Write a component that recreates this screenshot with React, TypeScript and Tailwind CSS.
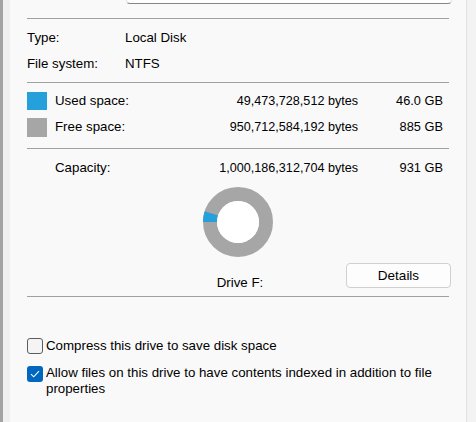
import React from "react";

const font = { fontFamily: '"Liberation Sans", Arial, sans-serif' };

function Sep({ className = "" }: { className?: string }) {
  return <div className={"h-px bg-[#a0a0a0] " + className} />;
}

function Donut() {
  const cx = 35;
  const cy = 35;
  const r = 28;
  const deg = 17.8;
  const a = ((180 + deg) * Math.PI) / 180;
  const x2 = cx + r * Math.cos(a);
  const y2 = cy + r * Math.sin(a);
  return (
    <svg width="70" height="70" viewBox="0 0 70 70">
      <circle cx={cx} cy={cy} r={r} fill="none" stroke="#a6a6a6" strokeWidth="14" />
      <path
        d={`M ${cx - r} ${cy} A ${r} ${r} 0 0 1 ${x2} ${y2}`}
        fill="none"
        stroke="#26a0da"
        strokeWidth="14"
      />
      <circle cx={cx} cy={cy} r="21" fill="#ffffff" />
    </svg>
  );
}

export default function App() {
  return (
    <div
      className="w-[476px] h-[422px] overflow-hidden flex bg-[#f3f3f3] text-[13.3px] text-black"
      style={font}
    >
      <div className="w-[3px] bg-[#a3a3a3]" />
      <div className="w-[7px] bg-[#f0f0f0]" />
      <div className="w-[457px] bg-[#f9f9f9] border-r border-[#e3e3e3] pl-[17px] pr-[17px] flex flex-col">
        {/* text box remnant */}
        <div className="ml-[99px] mr-[-3px] h-[24px] mt-[-20px] bg-white border border-[#e0e0e0] border-b-[#868686] rounded-[4px]" />
        <Sep className="mt-[14px]" />

        <div className="mt-[9px] h-[20px] flex items-center">
          <span className="w-[98px]">Type:</span>
          <span>Local Disk</span>
        </div>
        <div className="mt-[6px] h-[20px] flex items-center">
          <span className="w-[98px]">File system:</span>
          <span>NTFS</span>
        </div>
        <Sep className="mt-[8px]" />

        <div className="mt-[8px] h-[20px] flex items-center pr-[6px]">
          <div className="w-[20px] h-[18px] bg-[#26a0da]" />
          <span className="ml-[8px] flex-1">Used space:</span>
          <span className="text-[12.6px]">49,473,728,512 bytes</span>
          <span className="w-[85px] text-right text-[12.8px]">46.0 GB</span>
        </div>
        <div className="mt-[6px] h-[20px] flex items-center pr-[6px]">
          <div className="w-[20px] h-[19px] bg-[#a6a6a6]" />
          <span className="ml-[8px] flex-1">Free space:</span>
          <span className="text-[12.6px]">950,712,584,192 bytes</span>
          <span className="w-[85px] text-right text-[12.8px]">885 GB</span>
        </div>
        <Sep className="mt-[11px]" />

        <div className="mt-[9px] h-[20px] flex items-center pr-[6px]">
          <span className="ml-[28px] flex-1">Capacity:</span>
          <span className="text-[12.6px]">1,000,186,312,704 bytes</span>
          <span className="w-[85px] text-right text-[12.8px]">931 GB</span>
        </div>

        <div className="mt-[9px] flex justify-center">
          <Donut />
        </div>

        <div className="mt-[6px] grid grid-cols-[1fr_auto_1fr] items-start">
          <div />
          <div className="pt-[12px] leading-[16px] ml-[4px]">Drive F:</div>
          <div className="flex justify-end mr-[-2px]">
            <button className="w-[105px] h-[25px] rounded-[4px] border border-[#d0d0d0] bg-[#fdfdfd] text-[13.5px] leading-none">
              Details
            </button>
          </div>
        </div>
        <Sep className="mt-[5px]" />

        <div className="mt-[41px] flex items-center h-[16px]">
          <div className="w-[16px] h-[16px] rounded-[3px] border border-[#5c5c5c] bg-[#f4f4f4]" />
          <span className="ml-[3px] leading-[16px]">Compress this drive to save disk space</span>
        </div>
        <div className="mt-[11px] flex items-start">
          <div className="mt-[1px] w-[16px] h-[16px] shrink-0 rounded-[3px] bg-[#0067c0] flex items-center justify-center">
            <svg width="10" height="8" viewBox="0 0 10 8">
              <path d="M1 4.2 L3.7 6.8 L9 1.2" fill="none" stroke="#ffffff" strokeWidth="1.1" />
            </svg>
          </div>
          <span className="ml-[3px] leading-[16px]">
            Allow files on this drive to have contents indexed in addition to file properties
          </span>
        </div>
      </div>
      <div className="flex-1 bg-[#f3f3f3]" />
    </div>
  );
}
